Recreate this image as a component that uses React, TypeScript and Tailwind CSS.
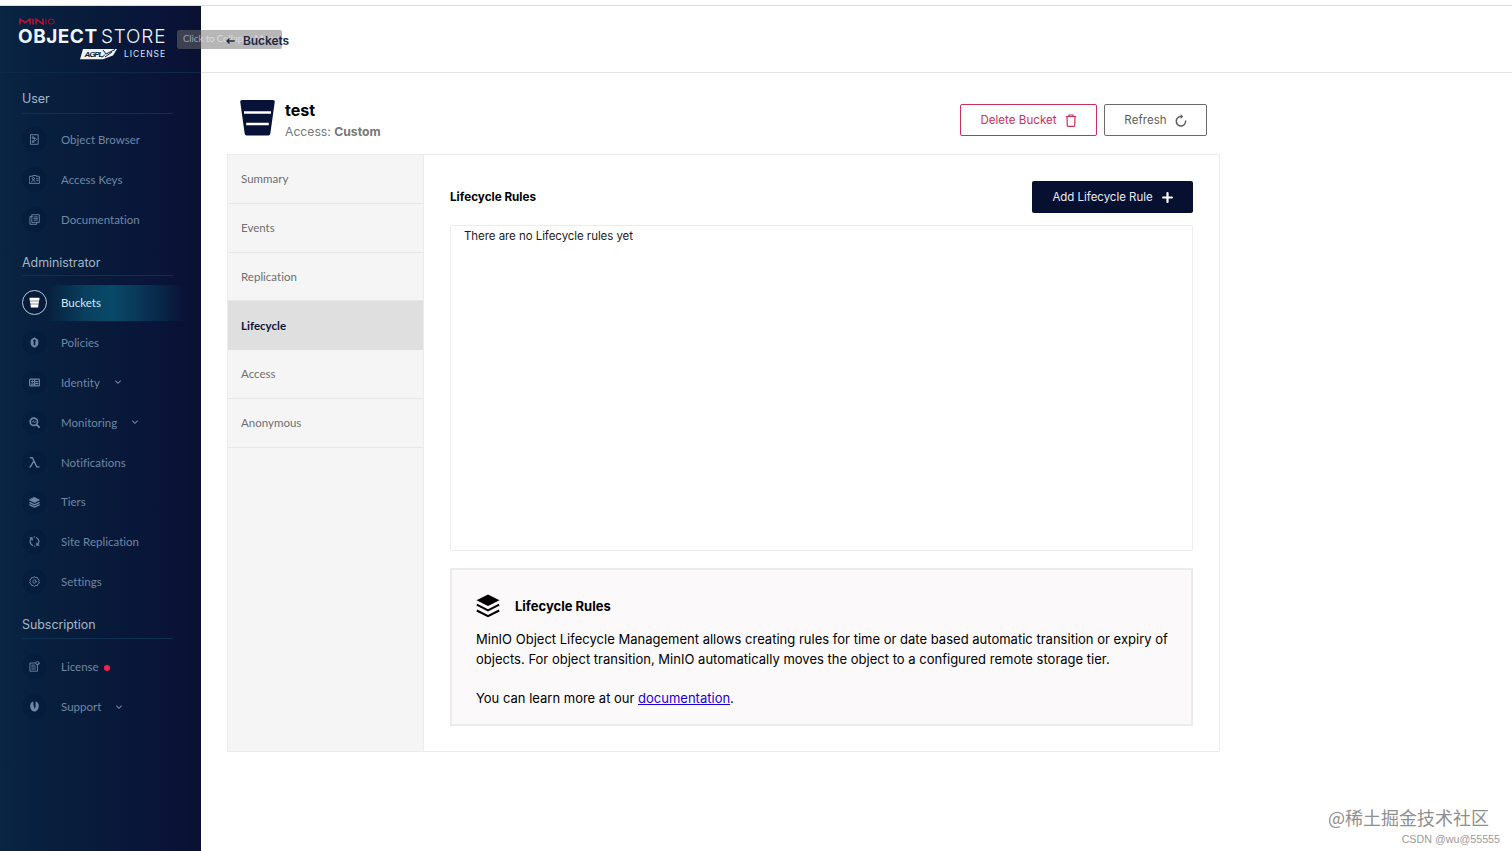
import { ReactNode } from "react";

interface NavItem {
  label: string;
  icon: ReactNode;
  active?: boolean;
  expandable?: boolean;
  badge?: boolean;
}

function Glyph({ size = 11, children }: { size?: number; children: ReactNode }) {
  return (
    <svg
      width={size}
      height={size}
      viewBox="0 0 12 12"
      fill="none"
      stroke="currentColor"
      strokeWidth="1"
      strokeLinecap="round"
      strokeLinejoin="round"
    >
      {children}
    </svg>
  );
}

const USER_ITEMS: NavItem[] = [
  {
    label: "Object Browser",
    icon: (
      <Glyph>
        <path d="M2 .8h8v10.4H2zM4 3.2h1.5v1.5H4zM6.8 4.5 8.3 6 6.8 7.5 5.8 6zM4 7.5h1.5V9H4z" />
      </Glyph>
    ),
  },
  {
    label: "Access Keys",
    icon: (
      <Glyph>
        <path d="M.7 2.5h3.5V1.6h3.6v.9h3.5v7.7H.7zM3 8.5c.2-2.3 3.4-2.3 3.6 0M8.3 5h1.5M8.3 7h1.5" />
        <circle cx="4.8" cy="5" r="1.2" />
      </Glyph>
    ),
  },
  {
    label: "Documentation",
    icon: (
      <Glyph>
        <path d="M3.5.8h7.7v8.4H3.5zM3.5 2.8H1v8.4h7.5v-2M5.5 3.2h3.7M5.5 5h3.7M5.5 6.8h3.7" />
      </Glyph>
    ),
  },
];

const ADMIN_ITEMS: NavItem[] = [
  {
    label: "Buckets",
    active: true,
    icon: (
      <Glyph>
        <path d="M.5.9h11L11.200 4H.8zM1.100 4.600h9.800l-.3 2.700H1.400zM1.600 7.900h8.800l-.4 3.500H2z" fill="currentColor" stroke="none" />
      </Glyph>
    ),
  },
  {
    label: "Policies",
    icon: (
      <Glyph>
        <path
          d="M6 .4 8 1.500C9.500 2 10.200 3.300 10.200 5v2c0 2.300-1.900 3.700-4.200 4.600C3.700 10.700 1.800 9.300 1.800 7V5c0-1.700.7-3 2.200-3.500zM6 2.800a1.400 1.400 0 0 0-.9 2.500v3.600h1.800V5.300A1.400 1.400 0 0 0 6 2.800z"
          fill="currentColor"
          fillRule="evenodd"
          stroke="none"
        />
      </Glyph>
    ),
  },
  {
    label: "Identity",
    expandable: true,
    icon: (
      <Glyph>
        <path d="M1.500 2.300h9a.8.8 0 0 1 .8.8v5.800a.8.8 0 0 1-.8.8h-9a.8.8 0 0 1-.8-.8V3.100a.8.8 0 0 1 .8-.8zM2.500 7.700h2.700M7.500 5h2M7.500 7.200h2M6.200 2.500v7" strokeWidth="1.300" />
        <circle cx="3.700" cy="5" r=".9" fill="currentColor" />
      </Glyph>
    ),
  },
  {
    label: "Monitoring",
    expandable: true,
    icon: (
      <Glyph>
        <circle cx="5.300" cy="5.200" r="4" strokeWidth="1.800" />
        <path d="M3.300 5.300h1l.8-1.300.8 2.300.6-1h.8" strokeWidth=".9" />
        <path d="m8.500 8.500 2.500 2.500" strokeWidth="2" />
      </Glyph>
    ),
  },
  {
    label: "Notifications",
    icon: (
      <Glyph>
        <path d="M1.500.8h2.200l4.800 10h2.500M5.300 4.500 1.200 11" strokeWidth="1.500" />
      </Glyph>
    ),
  },
  {
    label: "Tiers",
    icon: (
      <Glyph>
        <path d="M6 .6 11.300 3.300 6 6 .7 3.300z" fill="currentColor" />
        <path d="M.9 6.100 6 8.600l5.100-2.500M.9 8.600 6 11.100l5.100-2.500" strokeWidth="1.400" />
      </Glyph>
    ),
  },
  {
    label: "Site Replication",
    icon: (
      <Glyph>
        <path d="M3.700 10.200A4.800 4.800 0 0 1 3 2.200M1.300 2h2.200v2.300M8.300 1.800a4.800 4.800 0 0 1 .7 8M10.700 10H8.500V7.700M5.800 1h.4M5.800 11h.4" strokeWidth="1.300" />
      </Glyph>
    ),
  },
  {
    label: "Settings",
    icon: (
      <Glyph>
        <path d="m6 .7 1.400 1.100 1.800-.1.500 1.700 1.500 1-.7 1.600.7 1.700-1.500 1-.5 1.700-1.800-.1L6 11.400l-1.400-1.100-1.800.1-.5-1.700-1.500-1L1.500 6 .8 4.400l1.500-1 .5-1.700 1.800.1z" />
        <circle cx="6" cy="6" r="1.800" />
      </Glyph>
    ),
  },
];

const SUBSCRIPTION_ITEMS: NavItem[] = [
  {
    label: "License",
    badge: true,
    icon: (
      <Glyph>
        <path d="M7 2.200H1v8.900h8.300V6.500M3 4.500h3M3 6.500h4M3 8.700h4M9 3.200v3" />
        <circle cx="9.300" cy="2.500" r="1.800" />
      </Glyph>
    ),
  },
  {
    label: "Support",
    expandable: true,
    icon: (
      <Glyph>
        <path
          d="M4.800.5C2.500.8 1.300 3 1.300 5.500c0 3 1.900 6 4.700 6s4.700-3 4.700-6c0-2.500-1.200-4.700-3.500-5v4.800c0 1.700-.5 2.700-1.200 3.500-.3-1-.2-2-.7-3-.4-.8-.5-1.500-.5-2.500z"
          fill="currentColor"
          stroke="none"
        />
      </Glyph>
    ),
  },
];

const TABS = ["Summary", "Events", "Replication", "Lifecycle", "Access", "Anonymous"];

function NavRow({ item }: { item: NavItem }) {
  return (
    <li
      className={`flex h-[39.9px] items-center pl-[22px] ${
        item.active ? "text-[#d5e8f2]" : "text-[#6f87a4]"
      }`}
    >
      <span
        className={`flex size-[25px] shrink-0 items-center justify-center rounded-full ${
          item.active ? "border border-[#b4cbdc] bg-[#081a3a] text-white" : "bg-[#031d3b]/60"
        }`}
      >
        {item.icon}
      </span>
      <span
        className={`flex h-[36px] flex-1 items-center pl-[14px] text-[11.5px] tracking-[0.01px] ${
          item.active
            ? "bg-[linear-gradient(90deg,rgba(8,74,104,0)_0%,#08405f_25%,#084a68_42%,rgba(8,74,104,0)_90%)]"
            : ""
        }`}
      >
        {item.label}
        {item.badge && <span className="mt-[2px] ml-[5px] size-[6px] rounded-full bg-[#f5224e]" />}
        {item.expandable && (
          <svg className="ml-[14px]" width="8" height="8" viewBox="0 0 8 8" fill="none" stroke="currentColor" strokeWidth="1.1">
            <path d="m1.300 2.700 2.700 2.600 2.700-2.600" />
          </svg>
        )}
      </span>
    </li>
  );
}

function NavHeading({ className, children }: { className: string; children: ReactNode }) {
  return (
    <h2
      className={`mr-[28px] ml-[22px] flex items-end border-b border-[#0f3151] font-['Inter'] text-[12.5px] leading-[16px] tracking-[-0.07px] text-[#a3b6c8] ${className}`}
    >
      {children}
    </h2>
  );
}

function Sidebar() {
  return (
    <aside className="w-[201px] shrink-0 bg-[linear-gradient(90deg,#082542_0%,#08203f_18%,#081a39_50%,#09153a_75%,#0a1032_100%)] font-['Lato']">
      <div className="h-[67px] border-b border-[#0c2947] pt-[11px] pl-[18px]">
        <div className="flex h-[8px] items-center pl-px">
          <svg width="36" height="7" viewBox="0 0 36 7" fill="none" stroke="#c4122f">
            <path d="M1 6.500V1.200l5 3.300 5-3.300v5.300M14 .7v5.800M17 6.500V1.200l7 4.800V.7" strokeWidth="1.500" />
            <path d="M27 .7v5.800" strokeWidth=".8" />
            <rect x="29.200" y="1.200" width="6" height="4.800" rx="2.400" strokeWidth=".8" />
          </svg>
        </div>
        <div className="flex h-[23px] items-center pt-[2px] whitespace-nowrap font-['Inter'] text-[19px] text-[#eef4fa]">
          <span className="w-[83px] font-bold tracking-[0.5px]">OBJECT</span>
          <span className="font-light tracking-[0.8px]">STORE</span>
        </div>
        <div className="flex h-[12px] items-center pl-[62px]">
          <svg width="38" height="12" viewBox="0 0 38 12">
            <path d="M3 1h34l-4 6.500-10 3.700H0z" fill="#eef3f8" />
            <text x="4.500" y="8.500" fontSize="8" fontWeight="700" fontStyle="italic" fontFamily="Liberation Sans" fill="#0a1c3b" textLength="19">
              AGPL
            </text>
            <path d="m23 2 3 4 9-4.500M25 9l7-5M22 9.500l3-3" stroke="#0a1c3b" strokeWidth="1" fill="none" />
          </svg>
          <span className="pl-[6px] font-['Inter'] text-[8.5px] tracking-[0.95px] text-[#d8e2ec]">LICENSE</span>
        </div>
      </div>

      <NavHeading className="h-[41px] pb-[6px]">User</NavHeading>
      <ul className="pt-[6px]">
        {USER_ITEMS.map((item) => <NavRow key={item.label} item={item} />)}
      </ul>
      <NavHeading className="h-[36px] pb-[4px]">Administrator</NavHeading>
      <ul className="pt-[7px]">
        {ADMIN_ITEMS.map((item) => <NavRow key={item.label} item={item} />)}
      </ul>
      <NavHeading className="h-[37px] pb-[5px]">Subscription</NavHeading>
      <ul className="pt-[8px]">
        {SUBSCRIPTION_ITEMS.map((item) => <NavRow key={item.label} item={item} />)}
      </ul>
    </aside>
  );
}

function BucketHeader() {
  return (
    <div className="flex h-[81px] items-start pr-[13px] pl-[13px]">
      <svg className="mt-[27px]" width="36" height="36" viewBox="0 0 36 36">
        <path d="M2 0h31a1.800 1.800 0 0 1 1.700 2.200l-4.400 31.500a2 2 0 0 1-2 1.800H6.700a2 2 0 0 1-2-1.800L.3 2.200A1.800 1.800 0 0 1 2 0z" fill="#081236" />
        <path d="M4 12.500h27M6.200 24h22.600" stroke="#fff" strokeWidth="2.400" />
      </svg>
      <div className="mt-[27px] ml-[9px] flex-1">
        <h1 className="text-[16px] leading-[20px] font-bold text-black">test</h1>
        <p className="mt-[2px] text-[12.2px] leading-[20px] text-[#787878]">
          Access: <span className="font-bold">Custom</span>
        </p>
      </div>
      <div className="mt-[31px] flex gap-[7px] text-[11.5px] tracking-[0.05px]">
        <button className="flex h-[32px] w-[137px] items-center justify-center gap-[8px] rounded-[2px] border border-[#cb3058] pt-[2px] text-[#c83058]">
          Delete Bucket
          <svg className="-mt-px" width="12" height="13" viewBox="0 0 12 13" fill="none" stroke="currentColor" strokeWidth="1.200">
            <path d="M.8 2.500h10.400M4 2.300V1h4v1.300M2 2.500l.3 9c0 .4.300.8.800.8h5.800c.5 0 .8-.4.800-.8l.3-9" />
          </svg>
        </button>
        <button className="flex h-[32px] w-[103px] items-center justify-center gap-[8px] rounded-[2px] border border-[#6b6b6b] pt-[2px] text-[#5e5e5e]">
          Refresh
          <svg className="-mt-px" width="12" height="13" viewBox="0 0 12 13" fill="none" stroke="currentColor" strokeWidth="1.500">
            <path d="M10.600 6.500A4.700 4.700 0 1 1 5.900 2.600h1" />
            <path d="M5.700.3 8.200 2.600 5.700 5z" fill="currentColor" stroke="none" />
          </svg>
        </button>
      </div>
    </div>
  );
}

function HelpBox() {
  return (
    <section className="mt-[17px] h-[158px] border-2 border-[#ebebeb] bg-[#fbf9fa] px-[24px] pt-[24px] text-[13px] leading-[19.6px] text-black">
      <div className="flex h-[25px] items-center">
        <svg className="-mt-[2px]" width="24" height="24" viewBox="0 0 24 24">
          <path d="M12 .5 23.500 6.300 12 12 .5 6.300z" />
          <path d="M.8 10.700 12 16.300l11.200-5.600M.8 16.500 12 22.100l11.200-5.600" fill="none" stroke="#000" strokeWidth="2" />
        </svg>
        <h3 className="ml-[15px] font-bold">Lifecycle Rules</h3>
      </div>
      <p className="mt-[11px] whitespace-nowrap tracking-[0.01px]">
        MinIO Object Lifecycle Management allows creating rules for time or date based automatic transition or expiry of
        <br />
        objects. For object transition, MinIO automatically moves the object to a configured remote storage tier.
      </p>
      <p className="mt-[19.6px]">
        You can learn more at our <a className="text-[#1a00d8] underline">documentation</a>.
      </p>
    </section>
  );
}

export default function App() {
  return (
    <div className="relative flex h-[851px] w-[1512px] flex-col overflow-hidden bg-white pt-[5px] font-['Inter',sans-serif]">
      <div className="h-px bg-[#dedede]" />
      <div className="flex min-h-0 flex-1">
        <Sidebar />

        <main className="flex-1">
          <header className="relative z-10 flex h-[67px] items-center border-b border-[#e4e4e4] pt-[3px] pl-[25px] text-[12px] text-[#1b2742]">
            <svg width="9" height="8" viewBox="0 0 9 8" fill="none" stroke="currentColor" strokeWidth="1.300">
              <path d="M8.700 4H1M3.500 1.500 1 4l2.500 2.500" />
            </svg>
            <span className="ml-[8px] font-semibold tracking-[-0.1px]">Buckets</span>
          </header>

          <div className="ml-[26px] w-[993px]">
            <BucketHeader />

            <div className="flex h-[598px] border border-[#ececec]">
              <nav className="w-[196px] shrink-0 border-r border-[#ececec] bg-[#f5f5f5] font-['Lato'] text-[11.5px] tracking-[0.01px]">
                {TABS.map((tab) => (
                  <div
                    key={tab}
                    className={`flex h-[48.8px] items-center border-b pl-[13px] ${
                      tab === "Lifecycle"
                        ? "border-[#dfdfdf] bg-[#dfdfdf] font-bold text-[#0b1538]"
                        : "border-[#e7e7e7] text-[#6f6f6f]"
                    }`}
                  >
                    {tab}
                  </div>
                ))}
              </nav>

              <div className="min-w-0 flex-1 px-[26px] pt-[26px]">
                <div className="flex h-[32px] items-center justify-between">
                  <h2 className="pt-[2px] text-[11.7px] font-bold text-black">Lifecycle Rules</h2>
                  <button className="flex h-[32px] w-[161px] items-center justify-center gap-[9px] rounded-[2px] bg-[#071030] pt-px text-[11.5px] tracking-[-0.03px] text-[#e6eaf2]">
                    Add Lifecycle Rule
                    <svg width="11" height="11" viewBox="0 0 11 11" stroke="#fff" strokeWidth="2.200" strokeLinecap="round">
                      <path d="M5.500 1.100v8.800M1.100 5.500h8.800" />
                    </svg>
                  </button>
                </div>
                <div className="mt-[12px] h-[326px] rounded-[2px] border border-[#ececec] pl-[13px] text-[11.5px] leading-[20px] tracking-[-0.06px] text-[#1c1c1c]">
                  There are no Lifecycle rules yet
                </div>
                <HelpBox />
              </div>
            </div>
          </div>
        </main>
      </div>

      {/* Collapse tooltip fading over the header */}
      <div className="absolute top-[30px] left-[177px] flex h-[19px] w-[105px] items-center rounded-[2px] bg-[#6f6f6f]/50 pl-[6px] font-['Lato'] text-[9.5px] whitespace-nowrap text-white/50">
        Click to Collapse Menu
      </div>

      <div className="absolute right-[12px] bottom-[3px] flex flex-col items-end font-['Noto_Sans_CJK_SC',sans-serif]">
        <span className="pr-[11px] text-[18px] leading-[26px] text-[#8f8f8f]">@稀土掘金技术社区</span>
        <span className="font-['Liberation_Sans'] text-[10.7px] leading-[18px] text-[#9a9a9a]">CSDN @wu@55555</span>
      </div>
    </div>
  );
}
